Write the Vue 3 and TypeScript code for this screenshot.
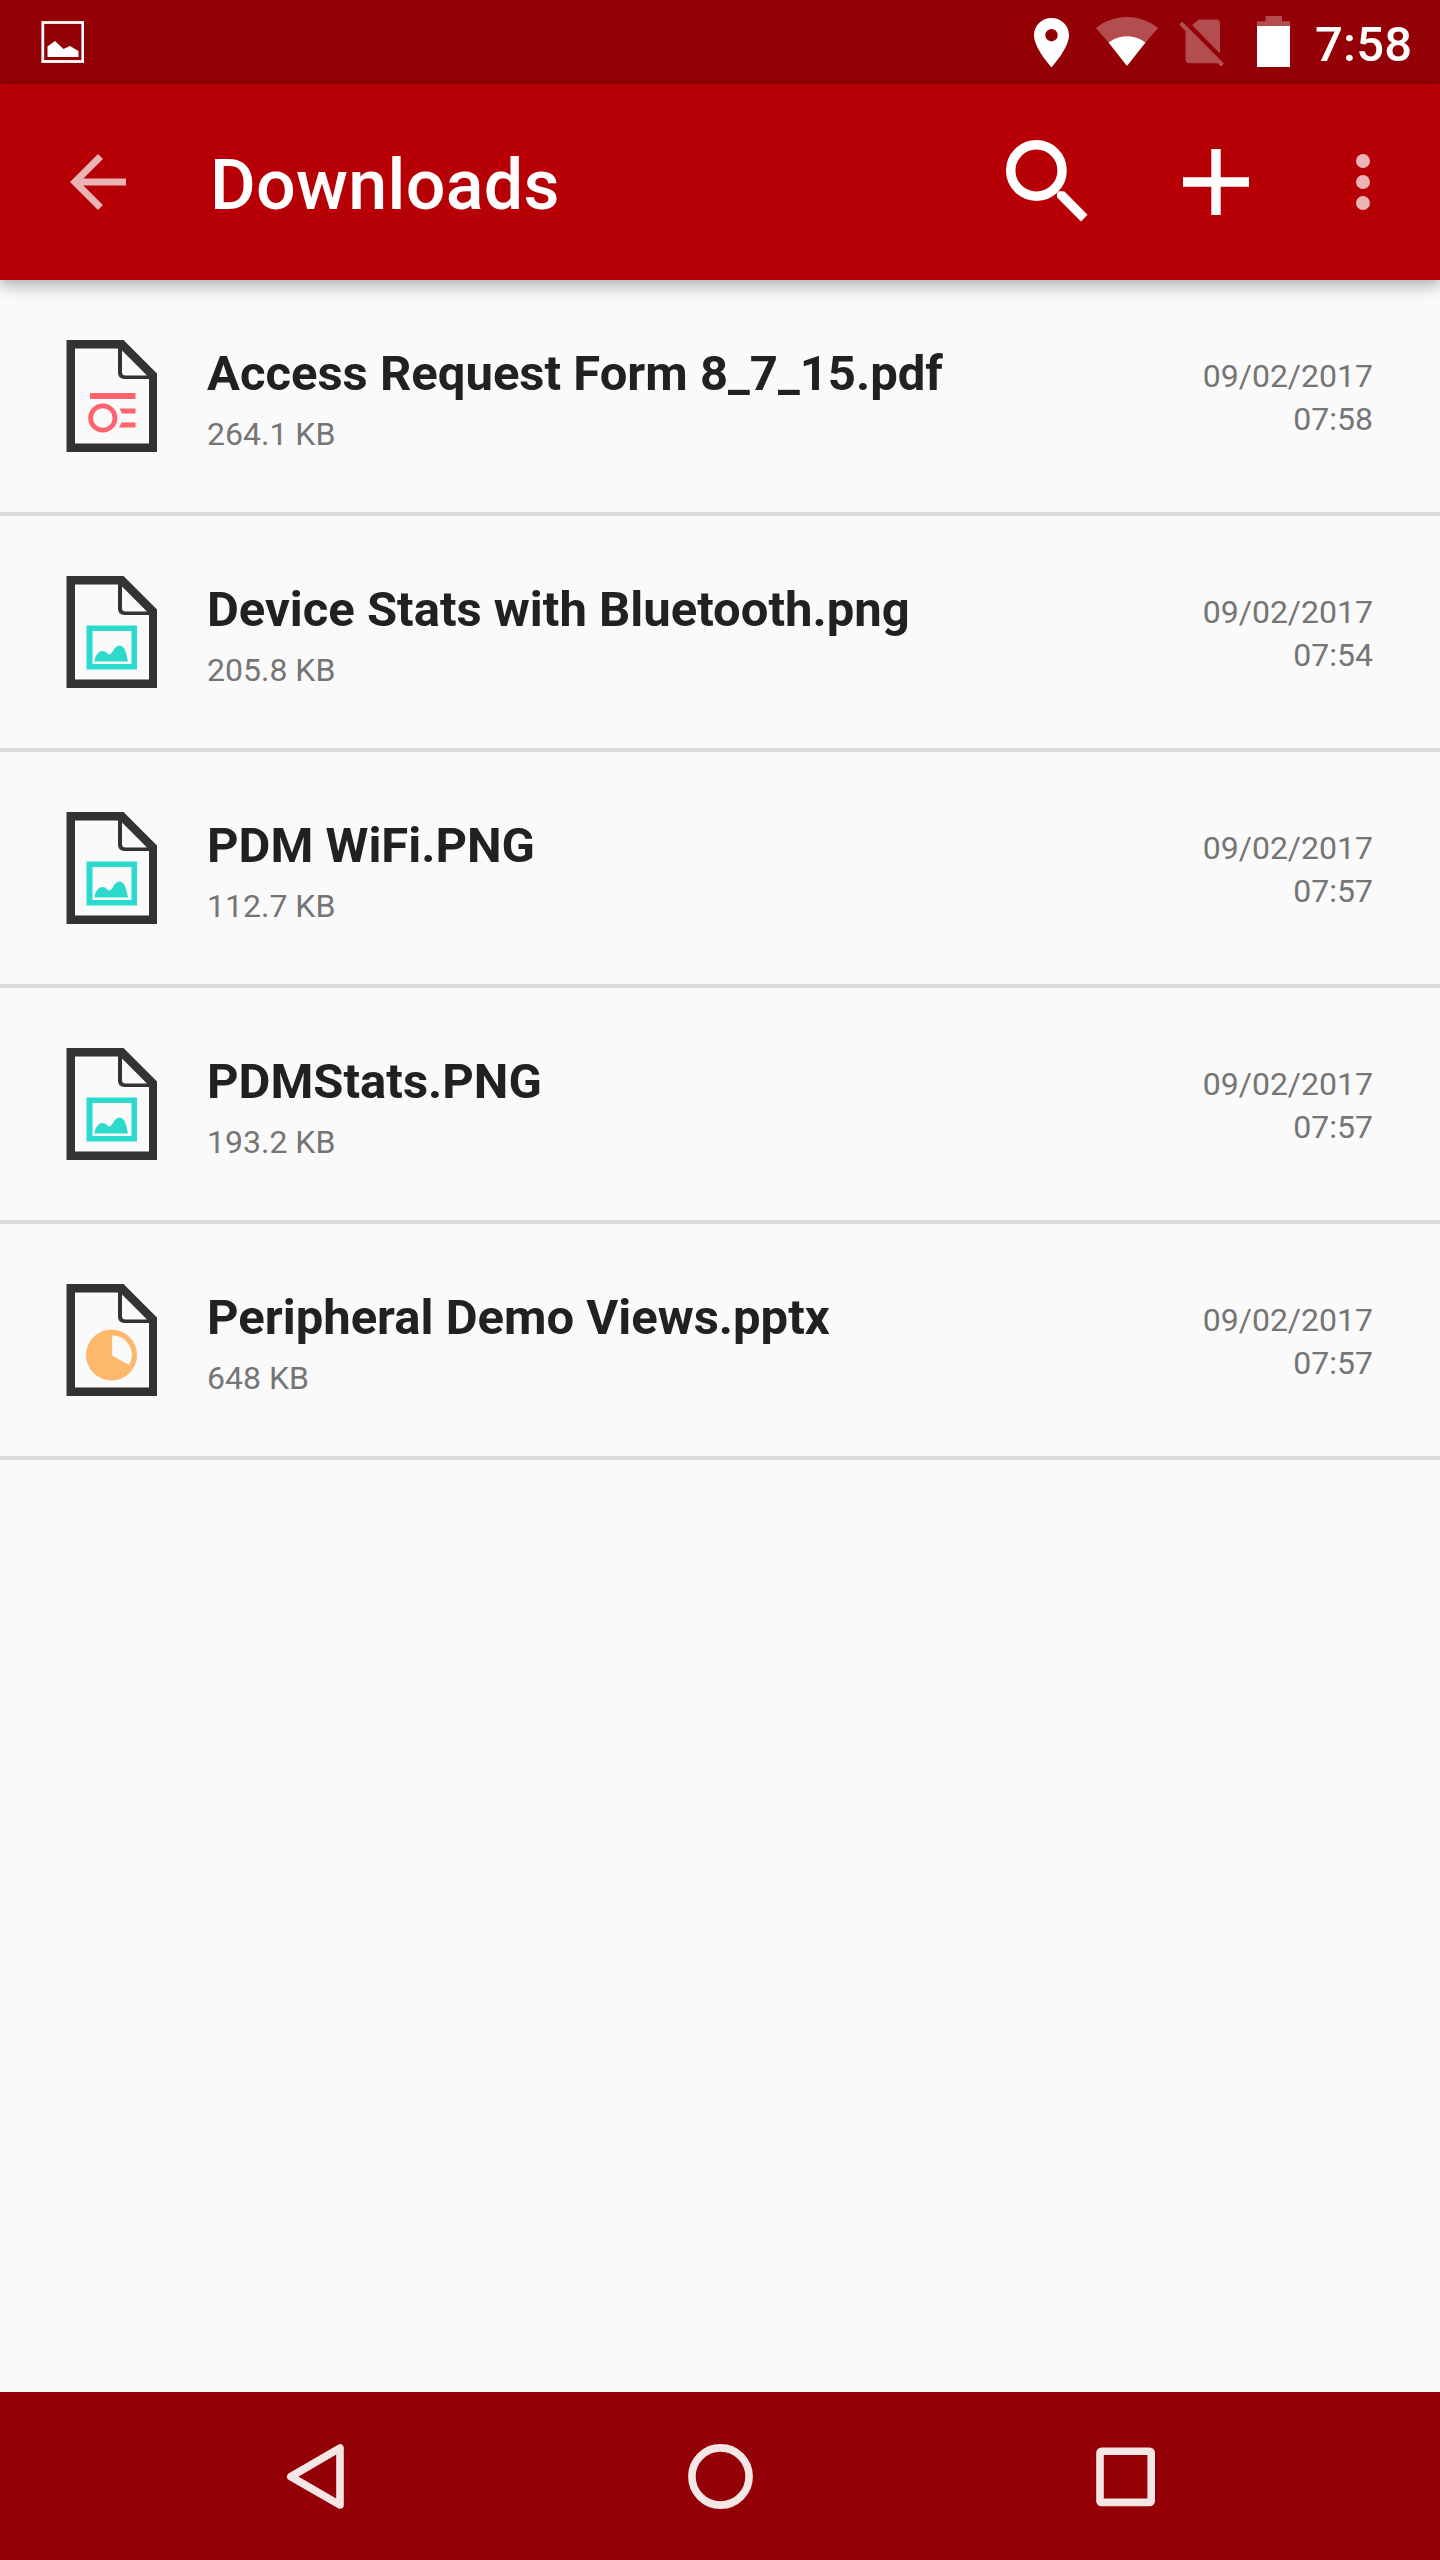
<script setup lang="ts">
type FileKind = 'pdf' | 'image' | 'slides'

interface DownloadItem {
  name: string
  size: string
  date: string
  time: string
  kind: FileKind
}

const files: DownloadItem[] = [
  { name: 'Access Request Form 8_7_15.pdf', size: '264.1 KB', date: '09/02/2017', time: '07:58', kind: 'pdf' },
  { name: 'Device Stats with Bluetooth.png', size: '205.8 KB', date: '09/02/2017', time: '07:54', kind: 'image' },
  { name: 'PDM WiFi.PNG', size: '112.7 KB', date: '09/02/2017', time: '07:57', kind: 'image' },
  { name: 'PDMStats.PNG', size: '193.2 KB', date: '09/02/2017', time: '07:57', kind: 'image' },
  { name: 'Peripheral Demo Views.pptx', size: '648 KB', date: '09/02/2017', time: '07:57', kind: 'slides' },
]
</script>

<template>
  <div class="screen">
    <div class="status-bar">
      <svg class="photo" width="43" height="42" viewBox="0 0 43 42">
        <rect x="1.800" y="1.500" width="40" height="39" fill="none" stroke="#fff" stroke-width="2.800" />
        <path d="M6.500 36V25.500L14 20L22.500 28L29 25L37.500 30V36Z" fill="#fff" />
      </svg>
      <div class="status-icons">
        <svg class="pin" width="36" height="50" viewBox="0.500 0 36 50">
          <path fill="#fff" fill-rule="evenodd" d="M18 0C8.200 0 .5 7.700 .5 17.300C.5 30.300 18 49.300 18 49.300S35.500 30.300 35.500 17.300C35.500 7.700 27.800 0 18 0ZM18 23.400A6.200 6.200 0 1 1 18 11A6.200 6.200 0 1 1 18 23.400Z" />
        </svg>
        <svg class="wifi" width="62" height="50" viewBox="0 0 62 50">
          <path fill="#fff" fill-opacity=".3" d="M31 0C19 0 8.300 4.200 0 10.900L12.500 25.500C17.500 21.500 24 19.200 31 19.200S44.500 21.500 49.500 25.500L62 10.900C53.700 4.200 43 0 31 0Z" />
          <path fill="#fff" d="M12.500 25.500C17.500 21.500 24 19.200 31 19.200S44.500 21.500 49.500 25.500L31 49Z" />
        </svg>
        <svg class="sim" width="46" height="50" viewBox="0 0 46 50">
          <g fill="#fff" fill-opacity=".3">
            <path d="M41 35.500L13.200 7.200L19.500 1.500H37.500Q41 1.500 41 5Z" />
            <path d="M6.500 12.900L38.700 45.300H10.500Q6.500 45.300 6.500 41.300ZM6.500 12.900L38.700 45.300L42 48.700L45 45.600L3.200 3.500L.2 6.600Z" />
          </g>
        </svg>
        <svg class="battery" width="33" height="51" viewBox="0 0 33 51">
          <path fill="#fff" fill-opacity=".3" d="M8.500 0H25V5.300H33V10H0V5.300H8.500Z" />
          <path fill="#fff" d="M0 10H33V51H0Z" />
        </svg>
        <span class="clock">7:58</span>
      </div>
    </div>

    <header class="app-bar">
      <svg class="back" width="84" height="84" viewBox="0 0 24 24">
        <path fill="#fff" fill-opacity=".7" d="M20 11H7.830l5.590-5.590L12 4l-8 8 8 8 1.410-1.410L7.830 13H20v-2z" />
      </svg>
      <h1>Downloads</h1>
      <svg class="search" width="82" height="82" viewBox="0 0 82 82">
        <circle cx="30.400" cy="30.500" r="25.700" fill="none" stroke="#fff" stroke-width="9.400" />
        <path d="M51.300 57.800L50.800 53.300L53.500 51.100L58.500 51.600L81.500 74.800L75 81.500Z" fill="#fff" />
      </svg>
      <svg class="add" width="66" height="66" viewBox="0 0 66 66">
        <path fill="#fff" d="M28.300 0H37.700V28.300H66V37.700H37.700V66H28.300V37.700H0V28.300H28.300Z" />
      </svg>
      <svg class="more" width="14" height="56" viewBox="0 0 14 56">
        <g fill="#fff" fill-opacity=".7">
          <circle cx="7" cy="7" r="7" />
          <circle cx="7" cy="28" r="7" />
          <circle cx="7" cy="49" r="7" />
        </g>
      </svg>
    </header>

    <main>
      <ul class="files">
        <li v-for="file in files" :key="file.name" class="file">
          <svg class="doc" width="92" height="112" viewBox="-0.500 0 92 112">
            <path fill="#333" fill-rule="evenodd" d="M0 0H57L90.500 33.500V112H0ZM8.500 8.500V103.500H82.500V39H58Q51.500 39 51.500 32.500V8.500ZM55.500 10.500V32Q55.500 35.500 59 35.500H80.500Z" />
            <g v-if="file.kind === 'pdf'" fill="#fd646e">
              <rect x="23.500" y="53" width="45.500" height="6" />
              <circle cx="36.300" cy="78" r="12.200" fill="none" stroke="#fd646e" stroke-width="4.800" />
              <path d="M53 68.500H69V73.500H55.500ZM55 82.500H69V87.500H52.500Z" />
            </g>
            <g v-else-if="file.kind === 'image'" fill="#2bd9cd">
              <path fill-rule="evenodd" d="M20 49.500H70.500V93.500H20ZM26 55V88H65V55Z" />
              <path d="M28 85.500C28.500 80 32 75 36 75C39.500 75 41 78.500 43 78.500C46 78.500 47.500 69.500 53 69.500C58.500 69.500 60 78 61.500 85.500Z" />
            </g>
            <g v-else>
              <circle cx="45" cy="71" r="25.500" fill="#fdb86c" />
              <path fill="#fafafa" d="M45.700 51.500A19.500 19.500 0 0 1 62.500 81L45.700 71.500Z" />
            </g>
          </svg>
          <div class="info">
            <span class="name">{{ file.name }}</span>
            <span class="size">{{ file.size }}</span>
          </div>
          <div class="stamp">
            <span>{{ file.date }}</span>
            <span>{{ file.time }}</span>
          </div>
        </li>
      </ul>
    </main>

    <nav class="nav-bar">
      <svg width="80" height="80" viewBox="0 0 80 80">
        <path d="M65 12V69L15.800 40.600Z" />
      </svg>
      <svg width="80" height="80" viewBox="0 0 80 80">
        <circle cx="40.500" cy="40.500" r="28.600" />
      </svg>
      <svg width="80" height="80" viewBox="0 0 80 80">
        <rect x="15" y="15.200" width="51.200" height="51.200" rx="1.500" />
      </svg>
    </nav>
  </div>
</template>

<style>
body {
  margin: 0;
}
</style>

<style scoped>
.screen {
  display: flex;
  flex-direction: column;
  width: 1440px;
  height: 2560px;
  background: #fafafa;
  color: #212121;
  font-family: Roboto, sans-serif;
}

svg {
  display: block;
  flex: none;
}

.status-bar {
  display: flex;
  justify-content: space-between;
  align-items: flex-start;
  height: 84px;
  padding: 0 29px 0 41px;
  box-sizing: border-box;
  background: #930005;
}

.photo {
  margin-top: 21px;
}

.status-icons {
  display: flex;
  align-items: flex-start;
}

.pin {
  margin: 18px 26px 0 0;
}

.wifi {
  margin: 17px 21px 0 0;
}

.sim {
  margin: 18px 32px 0 0;
}

.battery {
  margin: 16px 25px 0 0;
}

.clock {
  width: 96px;
  margin-top: 15px;
  color: #fff;
  font-size: 49px;
  font-weight: 500;
  line-height: 60px;
  letter-spacing: 0.2px;
  white-space: nowrap;
}

.app-bar {
  position: relative;
  display: flex;
  align-items: center;
  flex: none;
  height: 196px;
  padding: 0 70px 0 56px;
  box-sizing: border-box;
  background: #b70006;
  box-shadow: 0 7px 14px rgba(0, 0, 0, 0.26), 0 0 6px rgba(0, 0, 0, 0.08);
}

.app-bar h1 {
  flex: 1;
  margin: 6px 0 0 70px;
  color: #fff;
  font-size: 70px;
  font-weight: 500;
  line-height: 84px;
  letter-spacing: 0.3px;
}

.search {
  margin: -3px 95px 0 0;
}

.add {
  margin-right: 107px;
}

main {
  flex: 1;
}

.files {
  margin: 0;
  padding: 0;
  list-style: none;
}

.file {
  display: flex;
  align-items: flex-start;
  height: 236px;
  padding: 60px 67px 0 66px;
  box-sizing: border-box;
  border-bottom: 4px solid #dadada;
}

.info {
  display: flex;
  flex: 1;
  flex-direction: column;
  margin: 4px 0 0 49px;
}

.name {
  font-size: 49px;
  font-weight: 700;
  line-height: 60px;
}

.size {
  margin-top: 10px;
  color: #757575;
  font-size: 32px;
  line-height: 40px;
}

.stamp {
  display: flex;
  flex-direction: column;
  align-items: flex-end;
  margin-top: 15px;
  color: #757575;
  font-size: 32px;
  line-height: 43px;
}

.nav-bar {
  display: flex;
  justify-content: center;
  align-items: center;
  gap: 325px;
  flex: none;
  height: 168px;
  background: #930005;
}

.nav-bar svg {
  fill: none;
  stroke: #f5e6e6;
  stroke-width: 7.6;
  stroke-linejoin: round;
}
</style>
